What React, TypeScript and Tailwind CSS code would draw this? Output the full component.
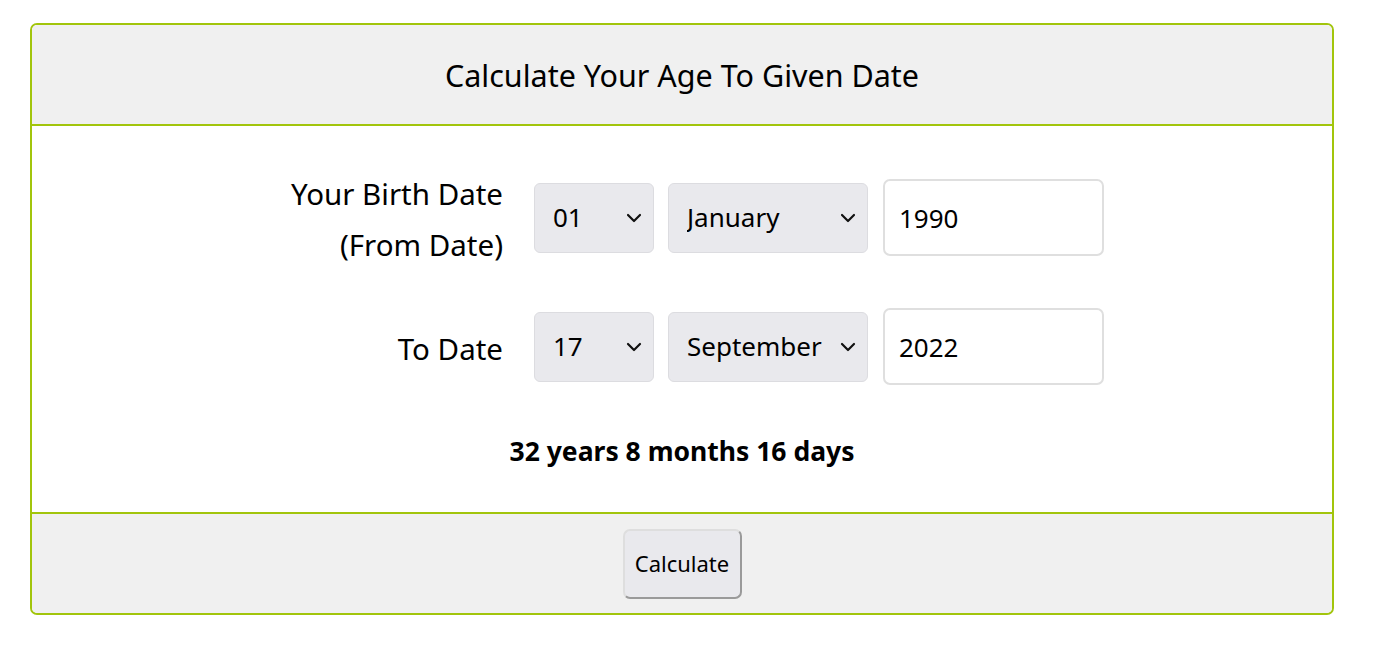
import React, { useState } from "react";

const days = Array.from({ length: 31 }, (_, i) => String(i + 1).padStart(2, "0"));
const months = [
  "January", "February", "March", "April", "May", "June",
  "July", "August", "September", "October", "November", "December",
];

function Chevron() {
  return (
    <svg
      className="pointer-events-none absolute right-[12px] top-1/2 -translate-y-1/2"
      width="16"
      height="10"
      viewBox="0 0 16 10"
      fill="none"
    >
      <path d="M2 2 L8 8 L14 2" stroke="#111" strokeWidth="2.2" strokeLinecap="round" strokeLinejoin="round" />
    </svg>
  );
}

function Select({ value, options, width }: { value: string; options: string[]; width: string }) {
  const [v, setV] = useState(value);
  return (
    <div className={`relative ${width} h-[70px]`}>
      <select
        value={v}
        onChange={(e) => setV(e.target.value)}
        className="h-full w-full appearance-none rounded-[6px] border border-[#dcdce0] bg-[#e9e9ed] pl-[18px] text-[26px] text-black outline-none"
      >
        {options.map((o) => (
          <option key={o} value={o}>
            {o}
          </option>
        ))}
      </select>
      <Chevron />
    </div>
  );
}

function YearInput({ value }: { value: string }) {
  const [v, setV] = useState(value);
  return (
    <input
      value={v}
      onChange={(e) => setV(e.target.value)}
      className="h-[77px] w-[221px] rounded-[7px] border-2 border-[#dfdfdf] bg-white pl-[14px] text-[26px] text-black outline-none"
    />
  );
}

function Row({ label, day, month, year }: { label: React.ReactNode; day: string; month: string; year: string }) {
  return (
    <div className="flex items-center">
      <div className="w-[243px] pt-[3px] text-right text-[29.5px] leading-[51px] text-black">{label}</div>
      <div className="ml-[31px] flex items-center">
        <Select value={day} options={days} width="w-[120px]" />
        <div className="ml-[14px]">
          <Select value={month} options={months} width="w-[200px]" />
        </div>
        <div className="ml-[15px]">
          <YearInput value={year} />
        </div>
      </div>
    </div>
  );
}

export default function App() {
  return (
    <div
      className="min-h-[654px] bg-white px-[30px] pt-[23px]"
      style={{ fontFamily: '"Noto Sans", "Open Sans", sans-serif' }}
    >
      <div className="w-[1304px] overflow-hidden rounded-[7px] border-2 border-[#a2c50c]">
        <div className="flex h-[99px] items-center justify-center bg-[#f0f0f0] pt-[3px] text-[30.5px] text-black">
          Calculate Your Age To Given Date
        </div>
        <div className="flex h-[390px] flex-col items-center border-y-2 border-[#a2c50c] bg-white">
          <div className="mt-[39px] flex flex-col">
            <Row
              label={
                <>
                  Your Birth Date
                  <br />
                  (From Date)
                </>
              }
              day="01"
              month="January"
              year="1990"
            />
            <div className="mt-[38px]">
              <Row label="To Date" day="17" month="September" year="2022" />
            </div>
          </div>
          <div className="mt-[48px] text-[26.5px] font-bold leading-[36px] text-black">32 years 8 months 16 days</div>
        </div>
        <div className="flex h-[99px] items-center justify-center bg-[#f0f0f0]">
          <button className="h-[70px] w-[119px] rounded-[7px] border-2 border-t-[#dedede] border-l-[#dedede] border-r-[#9a9a9a] border-b-[#9a9a9a] bg-[#e9e9ed] text-[22px] text-black">
            Calculate
          </button>
        </div>
      </div>
    </div>
  );
}
